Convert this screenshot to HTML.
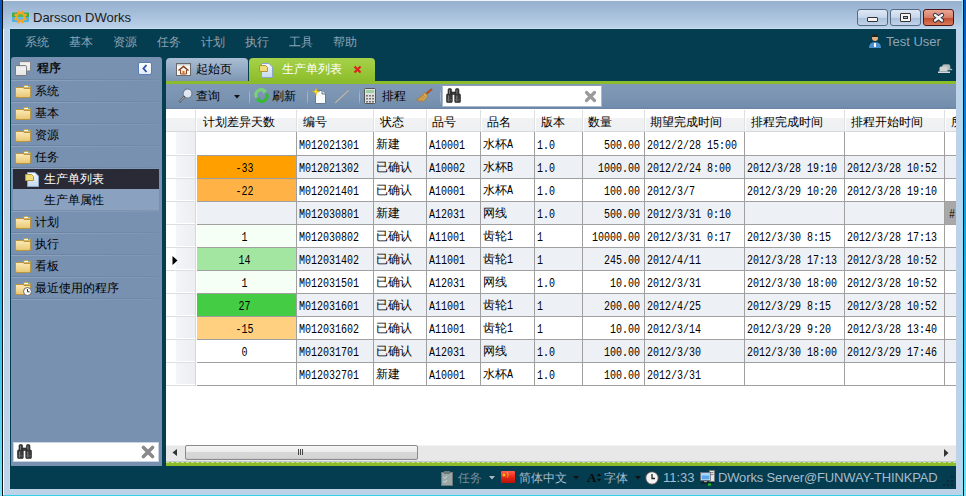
<!DOCTYPE html>
<html><head><meta charset="utf-8">
<style>
*{margin:0;padding:0;box-sizing:border-box}
html,body{width:966px;height:496px;overflow:hidden}
body{position:relative;background:linear-gradient(#0854bc,#0f6ed0 15%,#18a6e6 48%,#40c8f0 75%,#78e4f8);font-family:"Liberation Sans",sans-serif;font-size:12px;color:#000}
.a{position:absolute}
#win{left:2px;top:0;width:962px;height:496px;background:#bcd3ea;border-left:1px solid #111;border-right:1px solid #111}
#win:before{content:"";position:absolute;left:0;top:0;width:1px;bottom:0;background:#fff}
#win:after{content:"";position:absolute;right:0;top:0;width:1px;bottom:0;background:#8ee0f8}
#title{left:3px;top:0;width:959px;height:29px;background:linear-gradient(#96b1cf,#a3bcd8 40%,#b6cde6 85%,#bed4eb);border-top:1px solid #f0f4fa}
#bottomline{left:3px;top:495px;width:959px;height:1px;background:#36cfe6}
#app{left:10px;top:29px;width:946px;height:460px;background:#043d4f;box-shadow:0 -1px 0 #cadcf0,-1px 0 0 #c6daee}
.menu{top:34px;color:#8ea3b5;font-size:12px;line-height:16px}
#panel{left:11px;top:57px;width:151px;height:409px;background:#7891b0;border-radius:3px 3px 0 0}
.pi{left:13px;width:146px;height:22px;border-bottom:1px solid #6a829f;box-shadow:0 1px 0 #8aa0bd}
.pt{position:absolute;left:22px;top:3px;font-size:12px;line-height:16px;color:#000}
.fold{position:absolute;left:2px;top:5px;width:16px;height:12px;background:linear-gradient(#f8e7b0,#e6c673);border:1px solid #b59a52;border-radius:1px}
.fold:before{content:"";position:absolute;left:-1px;top:-3px;width:7px;height:3px;background:#f1dc9c;border:1px solid #b59a52;border-bottom:none;border-radius:1px 1px 0 0}
#tabs .tab{height:23px;border-radius:4px 4px 0 0}
#grid{left:166px;top:109px;width:790px;height:336px;background:#fff}
.hdr{top:0;height:23px;background:linear-gradient(#fff,#fff 45%,#eef0f3 50%,#f3f4f6);border-bottom:1px solid #c8c8c8;border-right:1px solid #e0e0e0;font-size:12px;line-height:22px;padding-left:7px;color:#000}
.row{left:0;width:790px;height:23px}
.c{position:absolute;top:0;height:23px;border-right:1px solid #a6a6a6;border-bottom:1px solid #a6a6a6;font-family:"Liberation Mono",monospace;font-size:10px;line-height:22px;white-space:nowrap;overflow:hidden;padding-left:2px}
.cj{font-family:"Liberation Sans",sans-serif;font-size:12px}
.r{text-align:right;padding-right:3px;padding-left:0}
.ctr{text-align:center;padding-left:0}
.alt .c{background:#edf0f4}
.rh{position:absolute;left:0;top:0;width:30px;height:23px;background:linear-gradient(90deg,#f7f8fa,#eceef2);border-bottom:1px solid #fff}
.sep{height:2px;background:linear-gradient(90deg,rgba(98,122,152,.6),rgba(98,122,152,.25)) 0 0/100% 1px no-repeat,linear-gradient(90deg,rgba(150,170,195,.75),rgba(150,170,195,.15)) 0 1px/100% 1px no-repeat}
.ptx{font-size:12px;line-height:16px;color:#000;white-space:nowrap}
.tbt{font-size:12px;line-height:16px;color:#000;white-space:nowrap}
.tsep{top:89px;width:1px;height:16px;background:linear-gradient(rgba(160,180,205,0),#a0b4cc 30%,#a0b4cc 70%,rgba(160,180,205,0))}
.hd{top:5px;font-size:12px;line-height:16px;white-space:nowrap;color:#000}
.dm{font-family:"Liberation Mono",monospace;font-size:10px;line-height:20px;white-space:nowrap;color:#000;padding-top:2px;transform:scaleY(1.2);transform-origin:0 0}
.dc{font-size:12px;line-height:22px;white-space:nowrap;color:#000}
.mm{font-family:"Liberation Mono",monospace;font-size:10px;display:inline-block;transform:scaleY(1.2);transform-origin:0 70%}
.stt{top:470px;font-size:13px;line-height:16px;color:#a6bccd;white-space:nowrap}
</style></head><body>
<div id="win" class="a"></div>
<div id="title" class="a"></div>
<div id="bottomline" class="a"></div>

<!-- title bar -->
<svg class="a" style="left:12px;top:10px" width="17" height="14" viewBox="0 0 17 14">
<rect x="0" y="2.5" width="17" height="5" rx="1" fill="#3aae48"/><rect x="0" y="7" width="17" height="5" rx="1" fill="#48b4e6"/>
<g fill="#f8a426" transform="rotate(22.5 8.5 7)"><circle cx="8.5" cy="7" r="5"/>
<rect x="7.2" y="0.3" width="2.6" height="13.4" rx="1"/><rect x="7.2" y="0.3" width="2.6" height="13.4" rx="1" transform="rotate(45 8.5 7)"/><rect x="7.2" y="0.3" width="2.6" height="13.4" rx="1" transform="rotate(90 8.5 7)"/><rect x="7.2" y="0.3" width="2.6" height="13.4" rx="1" transform="rotate(135 8.5 7)"/></g>
<path d="M5.6 7 A2.9 2.9 0 0 1 11.4 7Z" fill="#5cbc48"/><path d="M5.6 7 A2.9 2.9 0 0 0 11.4 7Z" fill="#60bcf0"/>
</svg>
<div class="a" style="left:33px;top:10px;font-size:13px;line-height:16px;color:#1a1a1a">Darsson DWorks</div>

<!-- window buttons -->
<div class="a" style="left:857px;top:9px;width:31px;height:17px;border:1px solid #566a84;border-radius:3px;background:linear-gradient(#dde8f4,#c6d6ea 50%,#a9bfd9 51%,#c2d4ea)"></div>
<div class="a" style="left:867px;top:17px;width:11px;height:5px;background:#f4f4f4;border:1px solid #333;border-radius:1px"></div>
<div class="a" style="left:890px;top:9px;width:31px;height:17px;border:1px solid #566a84;border-radius:3px;background:linear-gradient(#dde8f4,#c6d6ea 50%,#a9bfd9 51%,#c2d4ea)"></div>
<div class="a" style="left:900px;top:13px;width:11px;height:9px;border:1px solid #333;border-radius:1px;background:#f4f4f4"></div><div class="a" style="left:903px;top:16px;width:5px;height:3px;border:1px solid #333;background:#a8c0dc"></div>
<div class="a" style="left:923px;top:9px;width:31px;height:17px;border:1px solid #4a1818;border-radius:3px;background:linear-gradient(#eba694,#d87e68 50%,#c04a2c 51%,#d77a5a)"></div>
<svg class="a" style="left:932px;top:12px" width="13" height="11" viewBox="0 0 13 11"><path d="M3 3 L10 8.5 M10 3 L3 8.5" stroke="#2a3040" stroke-width="4.2" stroke-linecap="round"/><path d="M3 3 L10 8.5 M10 3 L3 8.5" stroke="#f4f4f4" stroke-width="2.4" stroke-linecap="round"/></svg>

<div id="app" class="a"></div>

<!-- menu -->
<div class="a menu" style="left:25px">系统</div>
<div class="a menu" style="left:69px">基本</div>
<div class="a menu" style="left:113px">资源</div>
<div class="a menu" style="left:157px">任务</div>
<div class="a menu" style="left:201px">计划</div>
<div class="a menu" style="left:245px">执行</div>
<div class="a menu" style="left:289px">工具</div>
<div class="a menu" style="left:333px">帮助</div>
<svg class="a" style="left:868px;top:34px" width="14" height="14" viewBox="0 0 14 14"><circle cx="7" cy="4" r="3" fill="#e8b07a"/><path d="M4 1.5 Q7 -1 10 1.5 L10 3 L4 3Z" fill="#222"/><path d="M1 14 Q1 8 7 8 Q13 8 13 14Z" fill="#4a90d0"/><rect x="6" y="9" width="2" height="4" fill="#fff"/></svg>
<div class="a menu" style="left:886px;top:34px;font-size:13px;color:#8ea3b5">Test User</div>

<!-- left panel -->
<div id="panel" class="a"></div>
<svg width="0" height="0" style="position:absolute"><defs><linearGradient id="fg" x1="0" y1="0" x2="0" y2="1"><stop offset="0" stop-color="#fcebb8"/><stop offset="1" stop-color="#e8c772"/></linearGradient></defs></svg>
<!-- panel header -->
<svg class="a" style="left:15px;top:61px" width="16" height="15" viewBox="0 0 16 15"><defs><linearGradient id="wg" x1="0" y1="0" x2="0" y2="1"><stop offset="0" stop-color="#d8d8d8"/><stop offset=".25" stop-color="#f2f2f2"/><stop offset="1" stop-color="#e4e4e4"/></linearGradient></defs>
<rect x="4.5" y="0.5" width="11" height="9.5" rx="1" fill="url(#wg)" stroke="#7a7a7a" stroke-width=".8"/>
<rect x="0.5" y="4.5" width="11" height="10" rx="1" fill="url(#wg)" stroke="#6a6a6a" stroke-width=".8"/>
</svg>
<div class="a" style="left:37px;top:60px;font-size:12px;line-height:16px;-webkit-text-stroke:0.3px #000">程序</div>
<div class="a" style="left:138px;top:62px;width:14px;height:13px;background:linear-gradient(#fff,#e4ecf8);border:1px solid #5a7fc0;border-radius:2px"></div>
<svg class="a" style="left:141px;top:64px" width="8" height="9" viewBox="0 0 8 9"><path d="M5.5 1 L2.5 4.5 L5.5 8" stroke="#2a4fa8" stroke-width="1.8" fill="none"/></svg>
<div class="a sep" style="left:11px;top:79px;width:148px"></div>
<svg class="a" style="left:15px;top:85px" width="16" height="13" viewBox="0 0 16 13"><defs></defs><path d="M8.5 0.5 L14 0.5 Q15.5 0.5 15.5 2 L15.5 3 L8.5 3Z" fill="#f3dc98" stroke="#b8953e"/><path d="M9.5 1.3 L13 1.3" stroke="#fff" stroke-width="1"/><path d="M13 1.3 L14.5 1.3" stroke="#2aa8e8" stroke-width="1"/><path d="M0.5 2.5 L8 2.5 L9 3.5 L15.5 3.5 L15.5 11 Q15.5 12.5 14 12.5 L2 12.5 Q0.5 12.5 0.5 11Z" fill="url(#fg)" stroke="#b8953e"/></svg>
<div class="a ptx" style="left:35px;top:83px">系统</div>
<div class="a sep" style="left:11px;top:101px;width:148px"></div>
<svg class="a" style="left:15px;top:107px" width="16" height="13" viewBox="0 0 16 13"><defs></defs><path d="M8.5 0.5 L14 0.5 Q15.5 0.5 15.5 2 L15.5 3 L8.5 3Z" fill="#f3dc98" stroke="#b8953e"/><path d="M9.5 1.3 L13 1.3" stroke="#fff" stroke-width="1"/><path d="M13 1.3 L14.5 1.3" stroke="#2aa8e8" stroke-width="1"/><path d="M0.5 2.5 L8 2.5 L9 3.5 L15.5 3.5 L15.5 11 Q15.5 12.5 14 12.5 L2 12.5 Q0.5 12.5 0.5 11Z" fill="url(#fg)" stroke="#b8953e"/></svg>
<div class="a ptx" style="left:35px;top:105px">基本</div>
<div class="a sep" style="left:11px;top:123px;width:148px"></div>
<svg class="a" style="left:15px;top:129px" width="16" height="13" viewBox="0 0 16 13"><defs></defs><path d="M8.5 0.5 L14 0.5 Q15.5 0.5 15.5 2 L15.5 3 L8.5 3Z" fill="#f3dc98" stroke="#b8953e"/><path d="M9.5 1.3 L13 1.3" stroke="#fff" stroke-width="1"/><path d="M13 1.3 L14.5 1.3" stroke="#2aa8e8" stroke-width="1"/><path d="M0.5 2.5 L8 2.5 L9 3.5 L15.5 3.5 L15.5 11 Q15.5 12.5 14 12.5 L2 12.5 Q0.5 12.5 0.5 11Z" fill="url(#fg)" stroke="#b8953e"/></svg>
<div class="a ptx" style="left:35px;top:127px">资源</div>
<div class="a sep" style="left:11px;top:145px;width:148px"></div>
<svg class="a" style="left:15px;top:151px" width="16" height="13" viewBox="0 0 16 13"><defs></defs><path d="M8.5 0.5 L14 0.5 Q15.5 0.5 15.5 2 L15.5 3 L8.5 3Z" fill="#f3dc98" stroke="#b8953e"/><path d="M9.5 1.3 L13 1.3" stroke="#fff" stroke-width="1"/><path d="M13 1.3 L14.5 1.3" stroke="#2aa8e8" stroke-width="1"/><path d="M0.5 2.5 L8 2.5 L9 3.5 L15.5 3.5 L15.5 11 Q15.5 12.5 14 12.5 L2 12.5 Q0.5 12.5 0.5 11Z" fill="url(#fg)" stroke="#b8953e"/></svg>
<div class="a ptx" style="left:35px;top:149px">任务</div>
<div class="a sep" style="left:11px;top:167px;width:148px"></div>
<div class="a" style="left:13px;top:169px;width:146px;height:20px;background:#2a2a36"></div>
<svg class="a" style="left:25px;top:171px" width="14" height="16" viewBox="0 0 14 16"><defs><linearGradient id="dg" x1="0" y1="0" x2="0" y2="1"><stop offset="0" stop-color="#f4f8fc"/><stop offset="1" stop-color="#c4d8ee"/></linearGradient></defs><path d="M2.5 1.5 L10 1.5 L13.5 5 L13.5 15.5 L2.5 15.5Z" fill="url(#dg)" stroke="#8aa6c8"/><path d="M0.5 3.5 L6.5 3.5 L8.5 5.5 L8.5 9.5 L0.5 9.5Z" fill="#f0dc78" stroke="#b09838"/></svg>
<div class="a ptx" style="left:44px;top:171px;color:#fff">生产单列表</div>
<div class="a" style="left:13px;top:189px;width:146px;height:22px;background:#8aa2bf"></div>
<div class="a ptx" style="left:44px;top:192px">生产单属性</div>
<div class="a sep" style="left:11px;top:210px;width:148px"></div>
<svg class="a" style="left:15px;top:216px" width="16" height="13" viewBox="0 0 16 13"><defs></defs><path d="M8.5 0.5 L14 0.5 Q15.5 0.5 15.5 2 L15.5 3 L8.5 3Z" fill="#f3dc98" stroke="#b8953e"/><path d="M9.5 1.3 L13 1.3" stroke="#fff" stroke-width="1"/><path d="M13 1.3 L14.5 1.3" stroke="#2aa8e8" stroke-width="1"/><path d="M0.5 2.5 L8 2.5 L9 3.5 L15.5 3.5 L15.5 11 Q15.5 12.5 14 12.5 L2 12.5 Q0.5 12.5 0.5 11Z" fill="url(#fg)" stroke="#b8953e"/></svg>
<div class="a ptx" style="left:35px;top:214px">计划</div>
<div class="a sep" style="left:11px;top:232px;width:148px"></div>
<svg class="a" style="left:15px;top:238px" width="16" height="13" viewBox="0 0 16 13"><defs></defs><path d="M8.5 0.5 L14 0.5 Q15.5 0.5 15.5 2 L15.5 3 L8.5 3Z" fill="#f3dc98" stroke="#b8953e"/><path d="M9.5 1.3 L13 1.3" stroke="#fff" stroke-width="1"/><path d="M13 1.3 L14.5 1.3" stroke="#2aa8e8" stroke-width="1"/><path d="M0.5 2.5 L8 2.5 L9 3.5 L15.5 3.5 L15.5 11 Q15.5 12.5 14 12.5 L2 12.5 Q0.5 12.5 0.5 11Z" fill="url(#fg)" stroke="#b8953e"/></svg>
<div class="a ptx" style="left:35px;top:236px">执行</div>
<div class="a sep" style="left:11px;top:254px;width:148px"></div>
<svg class="a" style="left:15px;top:260px" width="16" height="13" viewBox="0 0 16 13"><defs></defs><path d="M8.5 0.5 L14 0.5 Q15.5 0.5 15.5 2 L15.5 3 L8.5 3Z" fill="#f3dc98" stroke="#b8953e"/><path d="M9.5 1.3 L13 1.3" stroke="#fff" stroke-width="1"/><path d="M13 1.3 L14.5 1.3" stroke="#2aa8e8" stroke-width="1"/><path d="M0.5 2.5 L8 2.5 L9 3.5 L15.5 3.5 L15.5 11 Q15.5 12.5 14 12.5 L2 12.5 Q0.5 12.5 0.5 11Z" fill="url(#fg)" stroke="#b8953e"/></svg>
<div class="a ptx" style="left:35px;top:258px">看板</div>
<div class="a sep" style="left:11px;top:276px;width:148px"></div>
<svg class="a" style="left:15px;top:282px" width="16" height="13" viewBox="0 0 16 13"><defs></defs><path d="M8.5 0.5 L14 0.5 Q15.5 0.5 15.5 2 L15.5 3 L8.5 3Z" fill="#f3dc98" stroke="#b8953e"/><path d="M9.5 1.3 L13 1.3" stroke="#fff" stroke-width="1"/><path d="M13 1.3 L14.5 1.3" stroke="#2aa8e8" stroke-width="1"/><path d="M0.5 2.5 L8 2.5 L9 3.5 L15.5 3.5 L15.5 11 Q15.5 12.5 14 12.5 L2 12.5 Q0.5 12.5 0.5 11Z" fill="url(#fg)" stroke="#b8953e"/></svg>
<div class="a ptx" style="left:35px;top:280px">最近使用的程序</div>
<div class="a sep" style="left:11px;top:298px;width:148px"></div>
<svg class="a" style="left:23px;top:287px" width="9" height="9" viewBox="0 0 9 9"><circle cx="4.5" cy="4.5" r="4" fill="#fafafa" stroke="#666"/><path d="M4.5 2 L4.5 4.8 L6.5 4.8" stroke="#333" stroke-width="1" fill="none"/></svg>
<div class="a" style="left:13px;top:442px;width:146px;height:20px;background:#fff;border:1px solid #c8d4e4"></div>
<svg class="a" style="left:17px;top:444px" width="15" height="15" viewBox="0 0 15 15"><g fill="#3a3a3a" stroke="#222" stroke-width=".6"><rect x="2" y="0.5" width="3.6" height="7" rx="1.4"/><rect x="9.4" y="0.5" width="3.6" height="7" rx="1.4"/><rect x="5" y="4" width="5" height="2.4"/><rect x="0.5" y="6" width="5.8" height="8.5" rx="1"/><rect x="8.7" y="6" width="5.8" height="8.5" rx="1"/></g><g fill="#7a7a7a"><rect x="2" y="7.5" width="1.2" height="6"/><rect x="10.2" y="7.5" width="1.2" height="6"/><rect x="3" y="2" width="1" height="4"/><rect x="10.4" y="2" width="1" height="4"/></g><rect x="0.8" y="11.5" width="5.2" height=".8" fill="#666"/><rect x="9" y="11.5" width="5.2" height=".8" fill="#666"/></svg>
<svg class="a" style="left:141px;top:445px" width="14" height="14" viewBox="0 0 14 14"><path d="M2.5 2.5 L11.5 11.5 M11.5 2.5 L2.5 11.5" stroke="#8a8a8a" stroke-width="3.6" stroke-linecap="round"/></svg>

<!-- tabs -->
<div class="a" style="left:166px;top:58px;width:82px;height:23px;border-radius:4px 4px 0 0;background:linear-gradient(#aabdd4,#94aac4 50%,#7e96b3)"></div>
<svg class="a" style="left:176px;top:63px" width="15" height="13" viewBox="0 0 15 13"><rect x="0.5" y="0.5" width="14" height="12" fill="#fbf8f4" stroke="#6a6a6a"/><rect x="1" y="1" width="13" height="1.5" fill="#cfcfcf"/><path d="M2.5 7.5 L7.5 3.5 L12.5 7.5" stroke="#7a3a1a" stroke-width="1.4" fill="none"/><path d="M4.5 6.5 L4.5 11 L10.5 11 L10.5 6.5" stroke="#8a4a2a" stroke-width="1" fill="#f8e8d8"/><rect x="6.5" y="8" width="2" height="3" fill="#e07020"/></svg>
<div class="a" style="left:196px;top:61px;font-size:12px;line-height:16px">起始页</div>
<div class="a" style="left:249px;top:58px;width:126px;height:24px;border-radius:4px 4px 0 0;background:linear-gradient(#a6d24a,#8cbc2a)"></div>
<svg class="a" style="left:259px;top:62px" width="14" height="16" viewBox="0 0 14 16"><path d="M2.5 1.5 L10 1.5 L13.5 5 L13.5 15.5 L2.5 15.5Z" fill="url(#dg)" stroke="#8aa6c8"/><path d="M0.5 3.5 L6.5 3.5 L8.5 5.5 L8.5 9.5 L0.5 9.5Z" fill="#f0dc78" stroke="#b09838"/></svg>
<div class="a" style="left:282px;top:61px;font-size:12px;line-height:16px;color:#fff">生产单列表</div>
<svg class="a" style="left:353px;top:65px" width="9" height="9" viewBox="0 0 9 9"><path d="M1.5 1.5 L7.5 7.5 M7.5 1.5 L1.5 7.5" stroke="#e02020" stroke-width="2.2"/></svg>
<svg class="a" style="left:938px;top:64px" width="15" height="9" viewBox="0 0 15 9"><path d="M4.5 6 L4.5 2 Q4.5 0.5 6 0.5 L10.5 0.5 Q12 0.5 12 2 L12 5 L14 5 L14 6Z" fill="#b4bcbc" stroke="#9aa4a4" stroke-width=".5"/><path d="M1.5 7.5 L1.5 4 Q1.5 2.5 3 2.5 L8 2.5 Q9.5 2.5 9.5 4 L9.5 7.5Z" fill="#cdd2d2"/><rect x="0" y="7.5" width="12" height="1.5" fill="#d4d8d8"/></svg>
<div class="a" style="left:166px;top:81px;width:790px;height:3px;background:#8cbc2a"></div>
<!-- toolbar -->
<div class="a" style="left:166px;top:84px;width:790px;height:25px;background:linear-gradient(#8199b6,#7a94b2 50%,#738eac 90%,#6a85a4)"></div>

<!-- toolbar items -->
<svg class="a" style="left:178px;top:88px" width="15" height="15" viewBox="0 0 15 15"><circle cx="9.5" cy="5.5" r="4.5" fill="#dfe8f2" stroke="#6b7b8c" stroke-width="1.2"/><path d="M2 13.5 L6.3 9" stroke="#555" stroke-width="2.2" stroke-linecap="round"/><path d="M2 13.5 L6.3 9" stroke="#ddd" stroke-width="0.8"/></svg>
<div class="a tbt" style="left:196px;top:88px">查询</div>
<svg class="a" style="left:234px;top:95px" width="6" height="4" viewBox="0 0 6 4"><path d="M0 0 L6 0 L3 3.5Z" fill="#111"/></svg>
<div class="a tsep" style="left:249px"></div>
<svg class="a" style="left:254px;top:88px" width="15" height="15" viewBox="0 0 15 15"><path d="M2.6 9.5 A5.2 5.2 0 0 1 10 2.6" stroke="#78d078" stroke-width="3.2" fill="none"/><path d="M8.2 0 L13.2 2.4 L9.4 6.2Z" fill="#78d078"/><path d="M12.4 5.5 A5.2 5.2 0 0 1 5 12.4" stroke="#38b838" stroke-width="3.2" fill="none"/><path d="M6.8 15 L1.8 12.6 L5.6 8.8Z" fill="#30c030"/></svg>
<div class="a tbt" style="left:272px;top:88px">刷新</div>
<div class="a tsep" style="left:307px"></div>
<svg class="a" style="left:312px;top:88px" width="15" height="16" viewBox="0 0 15 16"><path d="M3.5 2.5 L10 2.5 L13.5 6 L13.5 15.5 L3.5 15.5Z" fill="#f8fbfc" stroke="#6a7a88"/><path d="M10 2.5 L10 6 L13.5 6" fill="#dde6ea" stroke="#6a7a88"/><path d="M4 0 L5 2.8 L8 3.5 L5 4.4 L4 7.5 L3 4.4 L0 3.5 L3 2.8Z" fill="#f8e030" stroke="#c8a010" stroke-width=".4"/></svg>
<svg class="a" style="left:334px;top:89px" width="16" height="15" viewBox="0 0 16 15"><path d="M1.5 13.5 L14.5 1.5" stroke="#999" stroke-width="2" stroke-linecap="round"/><path d="M1.5 13.5 L14.5 1.5" stroke="#c8ccd0" stroke-width="0.8"/></svg>
<div class="a tsep" style="left:359px"></div>
<svg class="a" style="left:364px;top:88px" width="12" height="16" viewBox="0 0 12 16"><rect x="0.5" y="0.5" width="11" height="15" rx="1" fill="#e0e0e0" stroke="#555"/><rect x="2" y="2" width="8" height="3" fill="#9cd0a0"/><g fill="#777"><rect x="2" y="7" width="2" height="1.5"/><rect x="5" y="7" width="2" height="1.5"/><rect x="8" y="7" width="2" height="1.5"/><rect x="2" y="10" width="2" height="1.5"/><rect x="5" y="10" width="2" height="1.5"/><rect x="8" y="10" width="2" height="1.5"/><rect x="2" y="13" width="2" height="1.5"/><rect x="5" y="13" width="2" height="1.5"/><rect x="8" y="13" width="2" height="1.5"/></g></svg>
<div class="a tbt" style="left:382px;top:88px">排程</div>
<svg class="a" style="left:416px;top:88px" width="17" height="15" viewBox="0 0 17 15"><path d="M16 1 L10 6" stroke="#b05020" stroke-width="2.2"/><path d="M9 4.5 L12 8 L8 13 Q3 14 0.5 12 Q4 9 9 4.5Z" fill="#d8a850" stroke="#9a7030" stroke-width=".6"/><path d="M2 12 L8 7 M4 13 L9.5 8" stroke="#9a7030" stroke-width=".6"/></svg>
<div class="a tsep" style="left:440px"></div>
<div class="a" style="left:442px;top:85px;width:160px;height:22px;background:#fff;border:1px solid #a8b8cc;border-top-color:#8a9cb4"></div>
<svg class="a" style="left:446px;top:88px" width="15" height="15" viewBox="0 0 15 15"><g fill="#3a3a3a" stroke="#222" stroke-width=".6"><rect x="2" y="0.5" width="3.6" height="7" rx="1.4"/><rect x="9.4" y="0.5" width="3.6" height="7" rx="1.4"/><rect x="5" y="4" width="5" height="2.4"/><rect x="0.5" y="6" width="5.8" height="8.5" rx="1"/><rect x="8.7" y="6" width="5.8" height="8.5" rx="1"/></g><g fill="#7a7a7a"><rect x="2" y="7.5" width="1.2" height="6"/><rect x="10.2" y="7.5" width="1.2" height="6"/><rect x="3" y="2" width="1" height="4"/><rect x="10.4" y="2" width="1" height="4"/></g><rect x="0.8" y="11.5" width="5.2" height=".8" fill="#666"/><rect x="9" y="11.5" width="5.2" height=".8" fill="#666"/></svg>
<svg class="a" style="left:584px;top:90px" width="13" height="13" viewBox="0 0 13 13"><path d="M2.5 2.5 L10.5 10.5 M10.5 2.5 L2.5 10.5" stroke="#9a9a9a" stroke-width="3.2" stroke-linecap="round"/></svg>
<!-- STATUS -->
<div class="a" style="left:166px;top:461px;width:790px;height:1px;background:#c4c8d0"></div><div class="a" style="left:166px;top:462px;width:790px;height:4px;background:#8cbc2a;border-top:1px dashed #c8e498"></div>
<svg class="a" style="left:441px;top:471px" width="12" height="15" viewBox="0 0 12 15"><rect x="0.5" y="1.5" width="11" height="13" fill="#9aa8a8" stroke="#6a7878"/><rect x="3" y="0" width="6" height="3" fill="#6a7878"/><path d="M2.5 6 L4 7.5 L6 5 M2.5 10 L4 11.5 L6 9" stroke="#d0dcdc" fill="none"/></svg>
<div class="a stt" style="left:458px;color:#7a8f99;font-size:12px">任务</div>
<svg class="a" style="left:489px;top:476px" width="6" height="4" viewBox="0 0 6 4"><path d="M0 0 L6 0 L3 3.5Z" fill="#aab8c0"/></svg>
<svg class="a" style="left:501px;top:471px" width="14" height="12" viewBox="0 0 14 12"><defs><linearGradient id="fl" x1="0" y1="0" x2="0" y2="1"><stop offset="0" stop-color="#ff6050"/><stop offset=".5" stop-color="#e82818"/><stop offset="1" stop-color="#b81008"/></linearGradient></defs><rect width="14" height="12" rx="1" fill="url(#fl)"/><path d="M3 1.8 L3.6 3.4 L5.2 3.4 L3.9 4.3 L4.4 5.8 L3 4.9 L1.6 5.8 L2.1 4.3 L0.8 3.4 L2.4 3.4Z" fill="#ffde00"/><g fill="#ffde00"><circle cx="6.3" cy="1.8" r=".6"/><circle cx="7" cy="3.2" r=".6"/><circle cx="7" cy="4.8" r=".6"/><circle cx="6.3" cy="6" r=".6"/></g></svg>
<div class="a stt" style="left:519px;font-size:12px">简体中文</div>
<svg class="a" style="left:573px;top:476px" width="6" height="4" viewBox="0 0 6 4"><path d="M0 0 L6 0 L3 3.5Z" fill="#111"/></svg>
<div class="a" style="left:587px;top:472px;font-family:'Liberation Serif',serif;font-size:13px;line-height:12px;color:#0a0a0a;font-weight:bold">A</div>
<svg class="a" style="left:597px;top:473px" width="4" height="9" viewBox="0 0 4 9"><path d="M0 3 L2 0.5 L4 3Z M0 6 L2 8.5 L4 6Z" fill="#0a0a0a"/></svg>
<div class="a stt" style="left:604px;font-size:12px">字体</div>
<svg class="a" style="left:635px;top:476px" width="6" height="4" viewBox="0 0 6 4"><path d="M0 0 L6 0 L3 3.5Z" fill="#111"/></svg>
<svg class="a" style="left:645px;top:471px" width="14" height="14" viewBox="0 0 14 14"><circle cx="7" cy="7" r="6.3" fill="#f4f4f4" stroke="#444" stroke-width="1"/><path d="M7 3 L7 7.5 L10 7.5" stroke="#222" stroke-width="1.3" fill="none"/></svg>
<div class="a stt" style="left:663px">11:33</div>
<svg class="a" style="left:700px;top:470px" width="15" height="16" viewBox="0 0 15 16"><rect x="9.5" y="0.5" width="5" height="11" fill="#e4e4e4" stroke="#777" stroke-width=".8"/><rect x="10.5" y="2" width="3" height="1" fill="#888"/><rect x="10.5" y="4" width="3" height="1" fill="#888"/><rect x="0.5" y="2.5" width="10" height="8" fill="#f0f0f0" stroke="#667" stroke-width=".8"/><rect x="1.5" y="3.5" width="8" height="6" fill="#5aa8e8"/><rect x="1.5" y="3.5" width="8" height="2" fill="#a8d8f8"/><rect x="4" y="11" width="3" height="1.5" fill="#999"/><rect x="1" y="12.5" width="13" height="1" fill="#111"/><rect x="8" y="13.5" width="3" height="2" fill="#20d020"/></svg>
<div class="a stt" style="left:718px;letter-spacing:-0.15px">DWorks Server@FUNWAY-THINKPAD</div>
<svg class="a" style="left:943px;top:476px" width="11" height="10" viewBox="0 0 11 10"><g fill="#0a2c38"><rect x="8" y="0" width="2" height="2"/><rect x="4" y="4" width="2" height="2"/><rect x="8" y="4" width="2" height="2"/><rect x="0" y="8" width="2" height="2"/><rect x="4" y="8" width="2" height="2"/><rect x="8" y="8" width="2" height="2"/></g></svg>
<!-- /STATUS -->
<!-- GRID -->
<div class="a" style="left:166px;top:109px;width:790px;height:352px;background:#fff;overflow:hidden">
<div class="a" style="left:0;top:0;width:790px;height:23px;background:linear-gradient(#fff 0,#fff 9px,#f1f2f4 9px,#eff0f2);border-bottom:1px solid #d6d8db"></div>
<div class="a" style="left:29px;top:1px;width:1px;height:21px;background:#dfe0e2"></div>
<div class="a" style="left:30px;top:1px;width:1px;height:21px;background:#fff"></div>
<div class="a hd" style="left:37px">计划差异天数</div>
<div class="a" style="left:130px;top:1px;width:1px;height:21px;background:#dfe0e2"></div>
<div class="a" style="left:131px;top:1px;width:1px;height:21px;background:#fff"></div>
<div class="a hd" style="left:137px">编号</div>
<div class="a" style="left:207px;top:1px;width:1px;height:21px;background:#dfe0e2"></div>
<div class="a" style="left:208px;top:1px;width:1px;height:21px;background:#fff"></div>
<div class="a hd" style="left:214px">状态</div>
<div class="a" style="left:260px;top:1px;width:1px;height:21px;background:#dfe0e2"></div>
<div class="a" style="left:261px;top:1px;width:1px;height:21px;background:#fff"></div>
<div class="a hd" style="left:266px">品号</div>
<div class="a" style="left:314px;top:1px;width:1px;height:21px;background:#dfe0e2"></div>
<div class="a" style="left:315px;top:1px;width:1px;height:21px;background:#fff"></div>
<div class="a hd" style="left:321px">品名</div>
<div class="a" style="left:368px;top:1px;width:1px;height:21px;background:#dfe0e2"></div>
<div class="a" style="left:369px;top:1px;width:1px;height:21px;background:#fff"></div>
<div class="a hd" style="left:375px">版本</div>
<div class="a" style="left:416px;top:1px;width:1px;height:21px;background:#dfe0e2"></div>
<div class="a" style="left:417px;top:1px;width:1px;height:21px;background:#fff"></div>
<div class="a hd" style="left:422px">数量</div>
<div class="a" style="left:478px;top:1px;width:1px;height:21px;background:#dfe0e2"></div>
<div class="a" style="left:479px;top:1px;width:1px;height:21px;background:#fff"></div>
<div class="a hd" style="left:484px">期望完成时间</div>
<div class="a" style="left:578px;top:1px;width:1px;height:21px;background:#dfe0e2"></div>
<div class="a" style="left:579px;top:1px;width:1px;height:21px;background:#fff"></div>
<div class="a hd" style="left:585px">排程完成时间</div>
<div class="a" style="left:678px;top:1px;width:1px;height:21px;background:#dfe0e2"></div>
<div class="a" style="left:679px;top:1px;width:1px;height:21px;background:#fff"></div>
<div class="a hd" style="left:685px">排程开始时间</div>
<div class="a" style="left:778px;top:1px;width:1px;height:21px;background:#dfe0e2"></div>
<div class="a" style="left:779px;top:1px;width:1px;height:21px;background:#fff"></div>
<div class="a hd" style="left:785px">所</div>
<div class="a" style="left:0;top:23px;width:29px;height:23px;background:linear-gradient(90deg,#fff,#fff 10px,#f4f5f7 10px,#eceef1)"></div>
<div class="a" style="left:0;top:45px;width:29px;height:1px;background:#fff"></div>
<div class="a" style="left:0;top:46px;width:29px;height:1px;background:#dcdee0"></div>
<div class="a" style="left:29px;top:23px;width:1px;height:24px;background:#d8d8d8"></div>
<div class="a" style="left:31px;top:23px;width:760px;height:23px;background:#fff"></div>
<div class="a" style="left:31px;top:46px;width:760px;height:1px;background:#a0a0a0"></div>
<div class="a dm" style="left:133px;top:23px">M012021301</div>
<div class="a dc" style="left:210px;top:24px">新建</div>
<div class="a dm" style="left:263px;top:23px">A10001</div>
<div class="a dc" style="left:317px;top:24px">水杯<span class="mm">A</span></div>
<div class="a dm" style="left:371px;top:23px">1.0</div>
<div class="a dm" style="left:416px;width:58px;top:23px;text-align:right">500.00</div>
<div class="a dm" style="left:481px;top:23px">2012/2/28 15:00</div>
<div class="a" style="left:0;top:47px;width:29px;height:22px;background:linear-gradient(90deg,#fff,#fff 10px,#f4f5f7 10px,#eceef1)"></div>
<div class="a" style="left:0;top:68px;width:29px;height:1px;background:#fff"></div>
<div class="a" style="left:0;top:69px;width:29px;height:1px;background:#dcdee0"></div>
<div class="a" style="left:29px;top:47px;width:1px;height:23px;background:#d8d8d8"></div>
<div class="a" style="left:31px;top:47px;width:760px;height:22px;background:#edf0f4"></div>
<div class="a" style="left:31px;top:69px;width:760px;height:1px;background:#a0a0a0"></div>
<div class="a" style="left:31px;top:47px;width:99px;height:22px;background:#ffa000"></div>
<div class="a dm" style="left:29px;top:46px;width:99px;text-align:center">-33</div>
<div class="a dm" style="left:133px;top:46px">M012021302</div>
<div class="a dc" style="left:210px;top:47px">已确认</div>
<div class="a dm" style="left:263px;top:46px">A10002</div>
<div class="a dc" style="left:317px;top:47px">水杯<span class="mm">B</span></div>
<div class="a dm" style="left:371px;top:46px">1.0</div>
<div class="a dm" style="left:416px;width:58px;top:46px;text-align:right">1000.00</div>
<div class="a dm" style="left:481px;top:46px">2012/2/24 8:00</div>
<div class="a dm" style="left:581px;top:46px">2012/3/28 19:10</div>
<div class="a dm" style="left:681px;top:46px">2012/3/28 10:52</div>
<div class="a" style="left:0;top:70px;width:29px;height:22px;background:linear-gradient(90deg,#fff,#fff 10px,#f4f5f7 10px,#eceef1)"></div>
<div class="a" style="left:0;top:91px;width:29px;height:1px;background:#fff"></div>
<div class="a" style="left:0;top:92px;width:29px;height:1px;background:#dcdee0"></div>
<div class="a" style="left:29px;top:70px;width:1px;height:23px;background:#d8d8d8"></div>
<div class="a" style="left:31px;top:70px;width:760px;height:22px;background:#fff"></div>
<div class="a" style="left:31px;top:92px;width:760px;height:1px;background:#a0a0a0"></div>
<div class="a" style="left:31px;top:70px;width:99px;height:22px;background:#ffb347"></div>
<div class="a dm" style="left:29px;top:69px;width:99px;text-align:center">-22</div>
<div class="a dm" style="left:133px;top:69px">M012021401</div>
<div class="a dc" style="left:210px;top:70px">已确认</div>
<div class="a dm" style="left:263px;top:69px">A10001</div>
<div class="a dc" style="left:317px;top:70px">水杯<span class="mm">A</span></div>
<div class="a dm" style="left:371px;top:69px">1.0</div>
<div class="a dm" style="left:416px;width:58px;top:69px;text-align:right">100.00</div>
<div class="a dm" style="left:481px;top:69px">2012/3/7</div>
<div class="a dm" style="left:581px;top:69px">2012/3/29 10:20</div>
<div class="a dm" style="left:681px;top:69px">2012/3/28 19:10</div>
<div class="a" style="left:0;top:93px;width:29px;height:22px;background:linear-gradient(90deg,#fff,#fff 10px,#f4f5f7 10px,#eceef1)"></div>
<div class="a" style="left:0;top:114px;width:29px;height:1px;background:#fff"></div>
<div class="a" style="left:0;top:115px;width:29px;height:1px;background:#dcdee0"></div>
<div class="a" style="left:29px;top:93px;width:1px;height:23px;background:#d8d8d8"></div>
<div class="a" style="left:31px;top:93px;width:760px;height:22px;background:#edf0f4"></div>
<div class="a" style="left:31px;top:115px;width:760px;height:1px;background:#a0a0a0"></div>
<div class="a dm" style="left:133px;top:92px">M012030801</div>
<div class="a dc" style="left:210px;top:93px">新建</div>
<div class="a dm" style="left:263px;top:92px">A12031</div>
<div class="a dc" style="left:317px;top:93px">网线</div>
<div class="a dm" style="left:371px;top:92px">1.0</div>
<div class="a dm" style="left:416px;width:58px;top:92px;text-align:right">500.00</div>
<div class="a dm" style="left:481px;top:92px">2012/3/31 0:10</div>
<div class="a" style="left:779px;top:93px;width:11px;height:22px;background:#a8a8a8"></div>
<div class="a dm" style="left:783px;top:92px">#</div>
<div class="a" style="left:0;top:116px;width:29px;height:22px;background:linear-gradient(90deg,#fff,#fff 10px,#f4f5f7 10px,#eceef1)"></div>
<div class="a" style="left:0;top:137px;width:29px;height:1px;background:#fff"></div>
<div class="a" style="left:0;top:138px;width:29px;height:1px;background:#dcdee0"></div>
<div class="a" style="left:29px;top:116px;width:1px;height:23px;background:#d8d8d8"></div>
<div class="a" style="left:31px;top:116px;width:760px;height:22px;background:#fff"></div>
<div class="a" style="left:31px;top:138px;width:760px;height:1px;background:#a0a0a0"></div>
<div class="a" style="left:31px;top:116px;width:99px;height:22px;background:#f5fff5"></div>
<div class="a dm" style="left:29px;top:115px;width:99px;text-align:center">1</div>
<div class="a dm" style="left:133px;top:115px">M012030802</div>
<div class="a dc" style="left:210px;top:116px">已确认</div>
<div class="a dm" style="left:263px;top:115px">A11001</div>
<div class="a dc" style="left:317px;top:116px">齿轮<span class="mm">1</span></div>
<div class="a dm" style="left:371px;top:115px">1</div>
<div class="a dm" style="left:416px;width:58px;top:115px;text-align:right">10000.00</div>
<div class="a dm" style="left:481px;top:115px">2012/3/31 0:17</div>
<div class="a dm" style="left:581px;top:115px">2012/3/30 8:15</div>
<div class="a dm" style="left:681px;top:115px">2012/3/28 17:13</div>
<div class="a" style="left:0;top:139px;width:29px;height:22px;background:linear-gradient(90deg,#fff,#fff 10px,#f4f5f7 10px,#eceef1)"></div>
<div class="a" style="left:0;top:160px;width:29px;height:1px;background:#fff"></div>
<div class="a" style="left:0;top:161px;width:29px;height:1px;background:#dcdee0"></div>
<div class="a" style="left:29px;top:139px;width:1px;height:23px;background:#d8d8d8"></div>
<div class="a" style="left:31px;top:139px;width:760px;height:22px;background:#edf0f4"></div>
<div class="a" style="left:31px;top:161px;width:760px;height:1px;background:#a0a0a0"></div>
<div class="a" style="left:31px;top:139px;width:99px;height:22px;background:#a2e6a2"></div>
<div class="a dm" style="left:29px;top:138px;width:99px;text-align:center">14</div>
<div class="a dm" style="left:133px;top:138px">M012031402</div>
<div class="a dc" style="left:210px;top:139px">已确认</div>
<div class="a dm" style="left:263px;top:138px">A11001</div>
<div class="a dc" style="left:317px;top:139px">齿轮<span class="mm">1</span></div>
<div class="a dm" style="left:371px;top:138px">1</div>
<div class="a dm" style="left:416px;width:58px;top:138px;text-align:right">245.00</div>
<div class="a dm" style="left:481px;top:138px">2012/4/11</div>
<div class="a dm" style="left:581px;top:138px">2012/3/28 17:13</div>
<div class="a dm" style="left:681px;top:138px">2012/3/28 10:52</div>
<div class="a" style="left:0;top:162px;width:29px;height:22px;background:linear-gradient(90deg,#fff,#fff 10px,#f4f5f7 10px,#eceef1)"></div>
<div class="a" style="left:0;top:183px;width:29px;height:1px;background:#fff"></div>
<div class="a" style="left:0;top:184px;width:29px;height:1px;background:#dcdee0"></div>
<div class="a" style="left:29px;top:162px;width:1px;height:23px;background:#d8d8d8"></div>
<div class="a" style="left:31px;top:162px;width:760px;height:22px;background:#fff"></div>
<div class="a" style="left:31px;top:184px;width:760px;height:1px;background:#a0a0a0"></div>
<div class="a" style="left:31px;top:162px;width:99px;height:22px;background:#f5fff5"></div>
<div class="a dm" style="left:29px;top:161px;width:99px;text-align:center">1</div>
<div class="a dm" style="left:133px;top:161px">M012031501</div>
<div class="a dc" style="left:210px;top:162px">已确认</div>
<div class="a dm" style="left:263px;top:161px">A12031</div>
<div class="a dc" style="left:317px;top:162px">网线</div>
<div class="a dm" style="left:371px;top:161px">1.0</div>
<div class="a dm" style="left:416px;width:58px;top:161px;text-align:right">10.00</div>
<div class="a dm" style="left:481px;top:161px">2012/3/31</div>
<div class="a dm" style="left:581px;top:161px">2012/3/30 18:00</div>
<div class="a dm" style="left:681px;top:161px">2012/3/28 10:52</div>
<div class="a" style="left:0;top:185px;width:29px;height:22px;background:linear-gradient(90deg,#fff,#fff 10px,#f4f5f7 10px,#eceef1)"></div>
<div class="a" style="left:0;top:206px;width:29px;height:1px;background:#fff"></div>
<div class="a" style="left:0;top:207px;width:29px;height:1px;background:#dcdee0"></div>
<div class="a" style="left:29px;top:185px;width:1px;height:23px;background:#d8d8d8"></div>
<div class="a" style="left:31px;top:185px;width:760px;height:22px;background:#edf0f4"></div>
<div class="a" style="left:31px;top:207px;width:760px;height:1px;background:#a0a0a0"></div>
<div class="a" style="left:31px;top:185px;width:99px;height:22px;background:#44cc44"></div>
<div class="a dm" style="left:29px;top:184px;width:99px;text-align:center">27</div>
<div class="a dm" style="left:133px;top:184px">M012031601</div>
<div class="a dc" style="left:210px;top:185px">已确认</div>
<div class="a dm" style="left:263px;top:184px">A11001</div>
<div class="a dc" style="left:317px;top:185px">齿轮<span class="mm">1</span></div>
<div class="a dm" style="left:371px;top:184px">1</div>
<div class="a dm" style="left:416px;width:58px;top:184px;text-align:right">200.00</div>
<div class="a dm" style="left:481px;top:184px">2012/4/25</div>
<div class="a dm" style="left:581px;top:184px">2012/3/29 8:15</div>
<div class="a dm" style="left:681px;top:184px">2012/3/28 10:52</div>
<div class="a" style="left:0;top:208px;width:29px;height:22px;background:linear-gradient(90deg,#fff,#fff 10px,#f4f5f7 10px,#eceef1)"></div>
<div class="a" style="left:0;top:229px;width:29px;height:1px;background:#fff"></div>
<div class="a" style="left:0;top:230px;width:29px;height:1px;background:#dcdee0"></div>
<div class="a" style="left:29px;top:208px;width:1px;height:23px;background:#d8d8d8"></div>
<div class="a" style="left:31px;top:208px;width:760px;height:22px;background:#fff"></div>
<div class="a" style="left:31px;top:230px;width:760px;height:1px;background:#a0a0a0"></div>
<div class="a" style="left:31px;top:208px;width:99px;height:22px;background:#ffd080"></div>
<div class="a dm" style="left:29px;top:207px;width:99px;text-align:center">-15</div>
<div class="a dm" style="left:133px;top:207px">M012031602</div>
<div class="a dc" style="left:210px;top:208px">已确认</div>
<div class="a dm" style="left:263px;top:207px">A11001</div>
<div class="a dc" style="left:317px;top:208px">齿轮<span class="mm">1</span></div>
<div class="a dm" style="left:371px;top:207px">1</div>
<div class="a dm" style="left:416px;width:58px;top:207px;text-align:right">10.00</div>
<div class="a dm" style="left:481px;top:207px">2012/3/14</div>
<div class="a dm" style="left:581px;top:207px">2012/3/29 9:20</div>
<div class="a dm" style="left:681px;top:207px">2012/3/28 13:40</div>
<div class="a" style="left:0;top:231px;width:29px;height:22px;background:linear-gradient(90deg,#fff,#fff 10px,#f4f5f7 10px,#eceef1)"></div>
<div class="a" style="left:0;top:252px;width:29px;height:1px;background:#fff"></div>
<div class="a" style="left:0;top:253px;width:29px;height:1px;background:#dcdee0"></div>
<div class="a" style="left:29px;top:231px;width:1px;height:23px;background:#d8d8d8"></div>
<div class="a" style="left:31px;top:231px;width:760px;height:22px;background:#edf0f4"></div>
<div class="a" style="left:31px;top:253px;width:760px;height:1px;background:#a0a0a0"></div>
<div class="a" style="left:31px;top:231px;width:99px;height:22px;background:#ffffff"></div>
<div class="a dm" style="left:29px;top:230px;width:99px;text-align:center">0</div>
<div class="a dm" style="left:133px;top:230px">M012031701</div>
<div class="a dc" style="left:210px;top:231px">已确认</div>
<div class="a dm" style="left:263px;top:230px">A12031</div>
<div class="a dc" style="left:317px;top:231px">网线</div>
<div class="a dm" style="left:371px;top:230px">1.0</div>
<div class="a dm" style="left:416px;width:58px;top:230px;text-align:right">100.00</div>
<div class="a dm" style="left:481px;top:230px">2012/3/30</div>
<div class="a dm" style="left:581px;top:230px">2012/3/30 18:00</div>
<div class="a dm" style="left:681px;top:230px">2012/3/29 17:46</div>
<div class="a" style="left:0;top:254px;width:29px;height:22px;background:linear-gradient(90deg,#fff,#fff 10px,#f4f5f7 10px,#eceef1)"></div>
<div class="a" style="left:0;top:275px;width:29px;height:1px;background:#fff"></div>
<div class="a" style="left:0;top:276px;width:29px;height:1px;background:#dcdee0"></div>
<div class="a" style="left:29px;top:254px;width:1px;height:23px;background:#d8d8d8"></div>
<div class="a" style="left:31px;top:254px;width:760px;height:22px;background:#fff"></div>
<div class="a" style="left:31px;top:276px;width:760px;height:1px;background:#a0a0a0"></div>
<div class="a dm" style="left:133px;top:253px">M012032701</div>
<div class="a dc" style="left:210px;top:254px">新建</div>
<div class="a dm" style="left:263px;top:253px">A10001</div>
<div class="a dc" style="left:317px;top:254px">水杯<span class="mm">A</span></div>
<div class="a dm" style="left:371px;top:253px">1.0</div>
<div class="a dm" style="left:416px;width:58px;top:253px;text-align:right">100.00</div>
<div class="a dm" style="left:481px;top:253px">2012/3/31</div>
<div class="a" style="left:130px;top:23px;width:1px;height:253px;background:#a0a0a0"></div>
<div class="a" style="left:207px;top:23px;width:1px;height:253px;background:#a0a0a0"></div>
<div class="a" style="left:260px;top:23px;width:1px;height:253px;background:#a0a0a0"></div>
<div class="a" style="left:314px;top:23px;width:1px;height:253px;background:#a0a0a0"></div>
<div class="a" style="left:368px;top:23px;width:1px;height:253px;background:#a0a0a0"></div>
<div class="a" style="left:416px;top:23px;width:1px;height:253px;background:#a0a0a0"></div>
<div class="a" style="left:478px;top:23px;width:1px;height:253px;background:#a0a0a0"></div>
<div class="a" style="left:578px;top:23px;width:1px;height:253px;background:#a0a0a0"></div>
<div class="a" style="left:678px;top:23px;width:1px;height:253px;background:#a0a0a0"></div>
<div class="a" style="left:778px;top:23px;width:1px;height:253px;background:#a0a0a0"></div>
<svg class="a" style="left:6px;top:147px" width="6" height="9" viewBox="0 0 6 9"><path d="M0.5 0 L5.5 4.5 L0.5 9Z" fill="#000"/></svg>
<div class="a" style="left:0;top:336px;width:790px;height:16px;background:#e8e8e8;border-top:1px solid #f2f2f2"></div>
<svg class="a" style="left:6px;top:340px" width="5" height="8" viewBox="0 0 5 8"><path d="M5 0 L0.5 3.5 L5 7Z" fill="#333"/></svg>
<svg class="a" style="left:778px;top:340px" width="5" height="8" viewBox="0 0 5 8"><path d="M0 0 L4.5 4 L0 8Z" fill="#333"/></svg>
<div class="a" style="left:19px;top:336px;width:233px;height:15px;border:1px solid #8a8a8a;border-radius:2px;background:linear-gradient(#f6f6f6,#ececec 45%,#d8d8d8 50%,#d4d4d4 90%,#c8c8c8)"></div>
<div class="a" style="left:132px;top:340px;width:1px;height:6px;background:#444"></div><div class="a" style="left:134px;top:340px;width:1px;height:6px;background:#444"></div><div class="a" style="left:136px;top:340px;width:1px;height:6px;background:#444"></div>
</div>
<!-- /GRID -->
</body></html>
